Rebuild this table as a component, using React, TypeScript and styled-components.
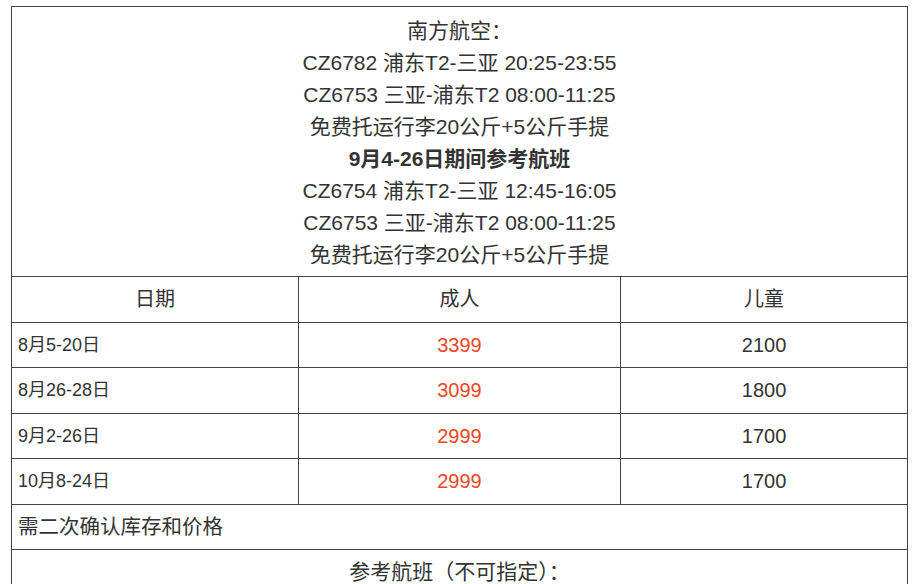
import styled, { createGlobalStyle } from 'styled-components'

const GlobalStyle = createGlobalStyle`
  html, body {
    margin: 0;
    padding: 0;
    background: #fff;
  }
  body {
    font-family: "Liberation Sans", Arial, "Noto Sans CJK SC", sans-serif;
    color: #333;
  }
`

const intro = [
  {text: '南方航空：'},
  {text: 'CZ6782 浦东T2-三亚 20:25-23:55'},
  {text: 'CZ6753 三亚-浦东T2 08:00-11:25'},
  {text: '免费托运行李20公斤+5公斤手提'},
  {text: '9月4-26日期间参考航班', bold: true},
  {text: 'CZ6754 浦东T2-三亚 12:45-16:05'},
  {text: 'CZ6753 三亚-浦东T2 08:00-11:25'},
  {text: '免费托运行李20公斤+5公斤手提'}
]

const prices = [
  {date: '8月5-20日', adult: 3399, child: 2100},
  {date: '8月26-28日', adult: 3099, child: 1800},
  {date: '9月2-26日', adult: 2999, child: 1700},
  {date: '10月8-24日', adult: 2999, child: 1700}
]

export default function App() {
  return (
    <Page>
      <GlobalStyle />
      <Table>
        <colgroup>
          <col style={{width: 287}} />
          <col style={{width: 322}} />
          <col style={{width: 287}} />
        </colgroup>
        <tbody>
          <tr>
            <IntroCell colSpan={3}>
              {intro.map((line, i) =>
                <Line key={i} $bold={line.bold}>{line.text}</Line>
              )}
            </IntroCell>
          </tr>
          <tr>
            <Cell>日期</Cell>
            <Cell>成人</Cell>
            <Cell>儿童</Cell>
          </tr>
          {prices.map(row =>
            <tr key={row.date}>
              <DateCell>{row.date}</DateCell>
              <Cell $red>{row.adult}</Cell>
              <Cell>{row.child}</Cell>
            </tr>
          )}
          <tr>
            <NoteCell colSpan={3}>需二次确认库存和价格</NoteCell>
          </tr>
          <tr>
            <Cell colSpan={3} $size={21}>参考航班（不可指定）：</Cell>
          </tr>
        </tbody>
      </Table>
    </Page>
  )
}

const Page = styled.div`
  padding: 6px 0 0 11px;
`

const Table = styled.table`
  border-collapse: collapse;
  table-layout: fixed;
  width: 897px;
  border: 1px solid #444;
`

const Cell = styled.td<{ $red?: boolean, $size?: number }>`
  border: 1px solid #444;
  padding: 6.25px 6px;
  font-size: ${p => p.$size || 20}px;
  line-height: 32px;
  text-align: center;
  vertical-align: middle;
  color: ${p => p.$red ? '#ef4523' : '#333'};
  white-space: nowrap;
`

const DateCell = styled(Cell)`
  font-size: 18px;
  text-align: left;
`

const NoteCell = styled(Cell)`
  font-size: 20.5px;
  text-align: left;
`

const IntroCell = styled(Cell)`
  padding: 8px 6px 5px;
  font-size: 21px;
`

const Line = styled.div<{ $bold?: boolean }>`
  line-height: 32px;
  font-weight: ${p => p.$bold ? 700 : 400};
`
